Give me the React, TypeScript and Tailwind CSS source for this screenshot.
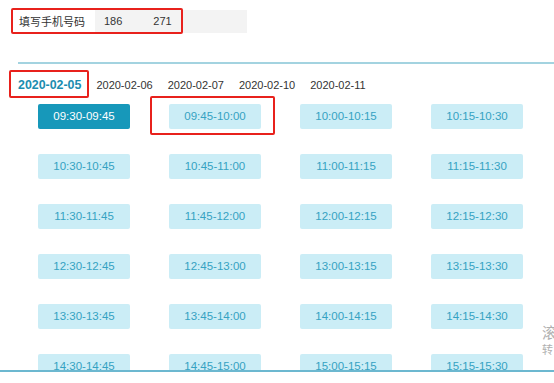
import React from "react";

const slots = [
  "09:30-09:45", "09:45-10:00", "10:00-10:15", "10:15-10:30",
  "10:30-10:45", "10:45-11:00", "11:00-11:15", "11:15-11:30",
  "11:30-11:45", "11:45-12:00", "12:00-12:15", "12:15-12:30",
  "12:30-12:45", "12:45-13:00", "13:00-13:15", "13:15-13:30",
  "13:30-13:45", "13:45-14:00", "14:00-14:15", "14:15-14:30",
  "14:30-14:45", "14:45-15:00", "15:00-15:15", "15:15-15:30",
];

const dates = ["2020-02-05", "2020-02-06", "2020-02-07", "2020-02-10", "2020-02-11"];

export default function App() {
  return (
    <div
      className="relative w-[554px] h-[383px] overflow-hidden bg-white text-[#333]"
      style={{ fontFamily: '"Liberation Sans", Arial, "Noto Sans CJK SC", sans-serif' }}
    >
      {/* phone row */}
      <div className="flex h-[23px] mt-[10px] ml-[11px] items-center">
        <div className="w-[84px] pl-[8px] text-[11px] leading-none" style={{ fontFamily: '"Noto Sans CJK SC", sans-serif' }}>
          填写手机号码
        </div>
        <div className="w-[152px] h-[23px] bg-[#f3f3f3] flex items-center text-[11px]">
          <span className="ml-[9px]">186</span>
          <span className="ml-[31px]">271</span>
        </div>
      </div>

      {/* divider */}
      <div className="ml-[18px] mt-[29px] h-[2px] bg-[#a3d3e0]" />

      {/* date tabs */}
      <div className="flex items-center h-[18px] mt-[12px] pl-[18px] gap-[15px] text-[11px] leading-none">
        {dates.map((d, i) => (
          <span
            key={d}
            className={i === 0 ? "text-[12.4px] font-bold text-[#1b8db0]" : "text-[#333]"}
          >
            {d}
          </span>
        ))}
      </div>

      {/* slots */}
      <div className="mt-[10px] h-[266px] overflow-hidden">
        <div className="pl-[38px] grid grid-cols-[repeat(4,92px)] gap-x-[39px] gap-y-[25px]">
          {slots.map((s, i) => (
            <div
              key={s}
              className={
                i === 0
                  ? "h-[25px] rounded-[2px] bg-[#1798ba] text-white text-[11.5px] flex items-center justify-center"
                  : "h-[25px] rounded-[2px] bg-[#cbedf6] text-[#35a2c2] text-[11.5px] flex items-center justify-center"
              }
            >
              {s}
            </div>
          ))}
        </div>
      </div>

      {/* bottom line */}
      <div className="h-[2px] bg-[#6cb8d0]" />

      {/* annotations */}
      <div className="absolute left-[11px] top-[8px] w-[172px] h-[26px] border-2 border-[#e8211c] rounded-[2px]" />
      <div className="absolute left-[9px] top-[70px] w-[80px] h-[28px] border-2 border-[#e8211c] rounded-[2px]" />
      <div className="absolute left-[150px] top-[96px] w-[125px] h-[39px] border-2 border-[#e8211c] rounded-[2px]" />

      {/* clipped side text */}
      <div
        className="absolute left-[542px] top-[324px] w-[12px] overflow-hidden text-[#b0b0b0] leading-none"
        style={{ fontFamily: '"Noto Sans CJK SC", sans-serif' }}
      >
        <div className="text-[15px]">滚</div>
        <div className="text-[11px] mt-[5px]">转</div>
      </div>
    </div>
  );
}
